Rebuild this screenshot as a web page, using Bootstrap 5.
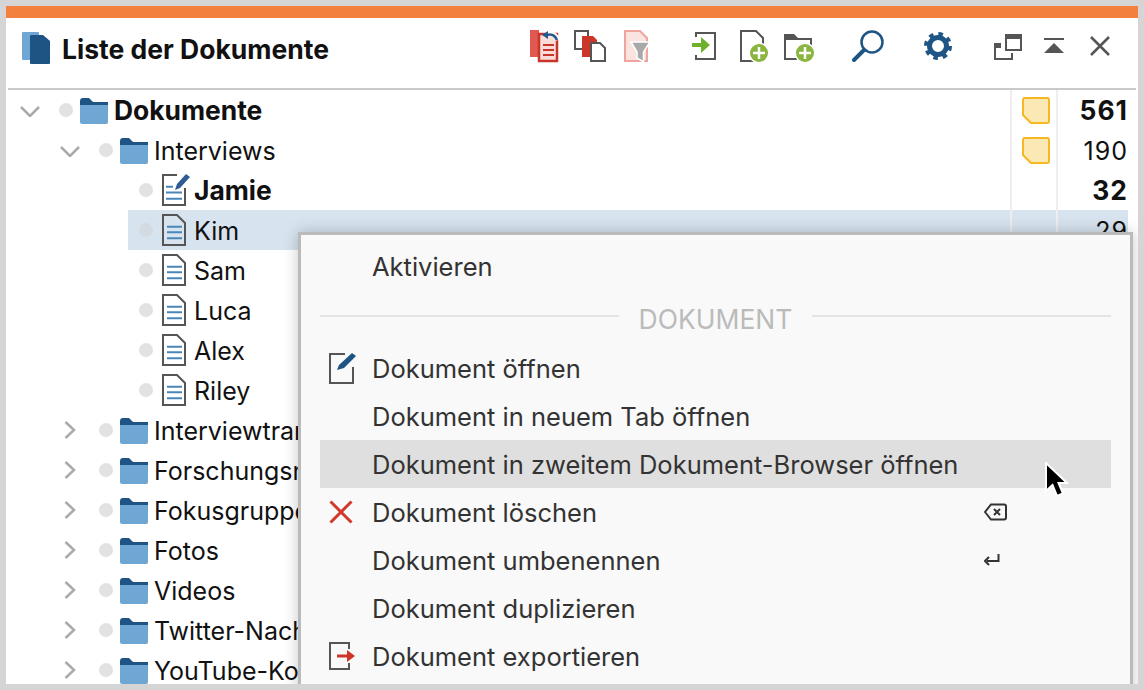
<!DOCTYPE html>
<html lang="de">
<head>
  <meta charset="UTF-8">
  <meta name="viewport" content="width=device-width, initial-scale=1">
  <title>Liste der Dokumente</title>
  <link href="https://cdn.jsdelivr.net/npm/bootstrap@5.3.2/dist/css/bootstrap.min.css" rel="stylesheet">
  <style>
    html, body { height: 100%; overflow: hidden; }
    body { background: #d5d5d5; font-family: Inter, "Liberation Sans", sans-serif; color: #111; }
    .win { margin: 6px; height: 678px; background: #fff; overflow: hidden; position: relative; }
    .stripe { height: 12px; background: #f3803c; }
    .head { height: 70px; padding: 10px 28px 0 16px; }
    .head h1 { font-size: 26.5px; font-weight: 700; margin: 3px 0 0 12px; line-height: 36px; }
    .head svg { display: block; height: 36px; }
    .t16 { margin-left: 16px; } .t18 { margin-left: 18px; } .t21 { margin-left: 21px; }
    .t24 { margin-left: 24px; } .t26 { margin-left: 26px; } .t38 { margin-left: 38px; }
    .t40 { margin-left: 40px; } .t42 { margin-left: 42px; }
    .rule { height: 2px; margin: 0 2px; background: #c9c9c9; }
    .tree-row { height: 40px; font-size: 25px; margin-right: 10px; white-space: nowrap; }
    .tree-row.fw-bold { font-size: 26.4px; }
    .lv0 { padding-left: 14px; } .lv1 { padding-left: 54px; } .lv2 { padding-left: 133px; }
    .tree-row.sel { background: #d7e3ef; margin-left: 122px; padding-left: 11px; }
    .twist { width: 39px; flex: none; }
    .twist.closed { padding-left: 4px; }
    .dot { width: 14px; height: 14px; border-radius: 50%; background: #e2e2e2; flex: none; margin-right: 7px; }
    .sel .dot { background: #d3dae1; }
    .slot { width: 28px; flex: none; margin-right: 6px; }
    .slot.fold { margin-top: 2px; }
    .lv2 .slot svg { margin-left: 2px; }
    .name { flex: 1 1 auto; min-width: 0; padding-top: 2px; line-height: 1.2; }
    .memo { width: 48px; height: 40px; flex: none; border-left: 2px solid #eee; border-right: 2px solid #eee; padding-left: 4px; }
    .count { width: 70px; flex: none; text-align: right; padding-top: 2px; line-height: 1.2; letter-spacing: 1px; }
    .ctx.dropdown-menu { position: absolute; left: 292px; top: 226px; width: 835px; min-width: 0; margin: 0; padding: 7px 19px 12px;
      background: #f9f9f9; border: 3px solid #bbb; border-radius: 0; box-shadow: 0 0 14px rgba(0, 0, 0, .22); font-size: 25.5px; color: #333; }
    .ctx .dropdown-item { height: 48px; padding: 2px 0 0; color: #333; }
    .ctx .dropdown-item.hot { background: #dfdfdf; }
    .ctx .ico { width: 52px; flex: none; padding-left: 9px; margin-top: -2px; }
    .ctx .key { width: 24px; margin-left: auto; margin-right: 103px; flex: none; margin-top: -2px; }
    .ctx-head { height: 54px; color: #bbb; font-size: 26.5px; }
    .ctx-head span { padding: 6px 20px 0; }
    .ctx-head i { flex: 1 1 auto; height: 2px; background: #e4e4e4; margin-top: -2px; }
    .cursor { position: absolute; left: 1037px; top: 456px; z-index: 1001; }
  </style>
</head>
<body>
  <svg class="d-none">
    <symbol id="folder" viewBox="0 0 28 26">
      <rect y="5" width="28" height="21" rx="2" fill="#6ea6d4"/>
      <path d="M0 7V3Q0 0 3 0H9L13 4H28V7Z" fill="#1d5484"/>
    </symbol>
    <symbol id="doc" viewBox="0 0 24 32">
      <path d="M1 1H15L23 9V31H1Z" fill="none" stroke="#555" stroke-width="2"/>
      <path d="M5 12.7H20M5 18.3H20M5 24.3H20" stroke="#4a86b8" stroke-width="2"/>
    </symbol>
    <symbol id="down" viewBox="0 0 20 11"><path d="M1 1L10 10L19 1" fill="none" stroke="#aaa" stroke-width="2.5"/></symbol>
    <symbol id="right" viewBox="0 0 12 18"><path d="M1.5 1L10 9L1.5 17" fill="none" stroke="#aaa" stroke-width="2.5"/></symbol>
    <symbol id="note" viewBox="0 0 28 27"><path d="M3 1H25Q27 1 27 3V24Q27 26 25 26H9L1 18V3Q1 1 3 1Z" fill="#fbe9b5" stroke="#f5b820" stroke-width="2"/></symbol>
  </svg>

  <div class="win">
    <div class="stripe"></div>

    <div class="head d-flex align-items-start">
      <svg width="28" viewBox="22 28 28 36">
        <rect x="22" y="32" width="17" height="28" rx="1" fill="#6fa6d3"/>
        <path d="M31 35H43L50 41V63Q50 64 49 64H31Q30 64 30 63V36Q30 35 31 35Z" fill="#1d5484"/>
      </svg>
      <h1>Liste der Dokumente</h1>
      <div class="ms-auto d-flex">
        <svg width="29" viewBox="530 28 29 36">
          <rect x="530" y="30" width="9" height="27" fill="#e0584f"/>
          <rect x="539" y="34" width="18" height="27" fill="#fbdcd8" stroke="#c8352b" stroke-width="2.5"/>
          <path d="M543 45H554M543 50H554M543 55H554" stroke="#c8352b" stroke-width="2"/>
          <path d="M546 35Q554 31 558 40" fill="none" stroke="#fff" stroke-width="5"/>
          <path d="M547 35Q554 33 557 40" fill="none" stroke="#24598e" stroke-width="2.5"/>
          <path d="M542 35L548 31V39Z" fill="#24598e"/>
        </svg>
        <svg class="t16" width="32" viewBox="574 28 32 36" style="margin-left:15px">
          <path d="M588 36V31H575V49H583" fill="none" stroke="#555" stroke-width="2"/>
          <path d="M582 36H593L597 40V57H582Z" fill="#cc3529"/>
          <path d="M591 43H600L605 48V61H591Z" fill="#fff" stroke="#555" stroke-width="2"/>
        </svg>
        <svg class="t18" width="26" viewBox="624 28 26 36">
          <path d="M625 31H640L647 38V61H625Z" fill="#fbe3e0" stroke="#eda59d" stroke-width="2"/>
          <path d="M631 42H650L643.500 52V62L637 58V52Z" fill="#a9a9a9" stroke="#fff" stroke-width="1.500"/>
        </svg>
        <svg class="t42" width="24" viewBox="692 28 24 36">
          <path d="M696 37V33H715V59H696V55" fill="none" stroke="#555" stroke-width="2"/>
          <path d="M692 43H701V37L710 45L701 53V47H692Z" fill="#6fb12b"/>
        </svg>
        <svg class="t24" width="28" viewBox="740 28 28 36">
          <path d="M741 31H756L763 38V61H741Z" fill="none" stroke="#555" stroke-width="2"/>
          <circle cx="759" cy="53" r="10.500" fill="#fff"/>
          <circle cx="759" cy="53" r="9" fill="#8ab53f"/>
          <path d="M759 47V59M753 53H765" stroke="#fff" stroke-width="2.500"/>
        </svg>
        <svg class="t16" width="30" viewBox="784 28 30 36">
          <path d="M785 37V59H811V39H785" fill="none" stroke="#555" stroke-width="2"/>
          <path d="M784 40V34H794L798 38H812V40Z" fill="#555"/>
          <circle cx="805" cy="53" r="10.500" fill="#fff"/>
          <circle cx="805" cy="53" r="9" fill="#8ab53f"/>
          <path d="M805 47V59M799 53H811" stroke="#fff" stroke-width="2.500"/>
        </svg>
        <svg class="t38" width="32" viewBox="852 28 32 36">
          <circle cx="872" cy="42" r="10.500" fill="none" stroke="#1e5585" stroke-width="2.500"/>
          <path d="M864 50L854 60" stroke="#1e5585" stroke-width="4" stroke-linecap="round"/>
        </svg>
        <svg class="t40" width="28" viewBox="924 28 28 36">
          <circle cx="938" cy="46" r="8.500" fill="none" stroke="#1e5585" stroke-width="5"/>
          <circle cx="938" cy="46" r="12" fill="none" stroke="#1e5585" stroke-width="4" stroke-dasharray="4.500 4.925"/>
        </svg>
        <svg class="t42" width="28" viewBox="994 28 28 36">
          <path d="M1001 44H995V59H1012V53" fill="none" stroke="#555" stroke-width="2"/>
          <rect x="995" y="43" width="6" height="5" fill="#555"/>
          <rect x="1006" y="35" width="15" height="15" fill="none" stroke="#555" stroke-width="2"/>
          <rect x="1005" y="34" width="17" height="5" fill="#555"/>
        </svg>
        <svg class="t21" width="21" viewBox="1043 28 21 36">
          <path d="M1044 39H1064" stroke="#555" stroke-width="2"/>
          <path d="M1054 43L1064 53H1044Z" fill="#555"/>
        </svg>
        <svg class="t26" width="20" viewBox="1090 28 20 36">
          <path d="M1091 37L1109 55M1109 37L1091 55" stroke="#555" stroke-width="2.500"/>
        </svg>
      </div>
    </div>
    <div class="rule"></div>

    <div class="tree-row lv0 d-flex align-items-center fw-bold">
      <div class="twist"><svg width="20" height="11"><use href="#down"/></svg></div>
      <div class="dot"></div>
      <div class="slot fold"><svg class="d-block" width="28" height="26"><use href="#folder"/></svg></div>
      <div class="name">Dokumente</div>
      <div class="memo d-flex align-items-center justify-content-center"><svg width="28" height="27"><use href="#note"/></svg></div>
      <div class="count">561</div>
    </div>
    <div class="tree-row lv1 d-flex align-items-center">
      <div class="twist"><svg width="20" height="11"><use href="#down"/></svg></div>
      <div class="dot"></div>
      <div class="slot fold"><svg class="d-block" width="28" height="26"><use href="#folder"/></svg></div>
      <div class="name">Interviews</div>
      <div class="memo d-flex align-items-center justify-content-center"><svg width="28" height="27"><use href="#note"/></svg></div>
      <div class="count">190</div>
    </div>
    <div class="tree-row lv2 d-flex align-items-center fw-bold">
      <div class="dot"></div>
      <div class="slot">
        <svg class="d-block" width="28" height="32" viewBox="0 0 28 32">
          <path d="M15 1H1V31H23V14" fill="none" stroke="#555" stroke-width="2"/>
          <path d="M4 12.700H11M4 18.500H20M4 24.700H20" stroke="#4a86b8" stroke-width="2"/>
          <path d="M24 0L28 3L18 14L13 16L15 10Z" fill="#2f5c92"/>
        </svg>
      </div>
      <div class="name">Jamie</div>
      <div class="memo"></div>
      <div class="count">32</div>
    </div>
    <div class="tree-row lv2 sel d-flex align-items-center">
      <div class="dot"></div>
      <div class="slot"><svg class="d-block" width="24" height="32"><use href="#doc"/></svg></div>
      <div class="name">Kim</div>
      <div class="memo"></div>
      <div class="count">29</div>
    </div>
    <div class="tree-row lv2 d-flex align-items-center">
      <div class="dot"></div>
      <div class="slot"><svg class="d-block" width="24" height="32"><use href="#doc"/></svg></div>
      <div class="name">Sam</div>
    </div>
    <div class="tree-row lv2 d-flex align-items-center">
      <div class="dot"></div>
      <div class="slot"><svg class="d-block" width="24" height="32"><use href="#doc"/></svg></div>
      <div class="name">Luca</div>
    </div>
    <div class="tree-row lv2 d-flex align-items-center">
      <div class="dot"></div>
      <div class="slot"><svg class="d-block" width="24" height="32"><use href="#doc"/></svg></div>
      <div class="name">Alex</div>
    </div>
    <div class="tree-row lv2 d-flex align-items-center">
      <div class="dot"></div>
      <div class="slot"><svg class="d-block" width="24" height="32"><use href="#doc"/></svg></div>
      <div class="name">Riley</div>
    </div>
    <div class="tree-row lv1 d-flex align-items-center">
      <div class="twist closed"><svg class="d-block" width="12" height="18"><use href="#right"/></svg></div>
      <div class="dot"></div>
      <div class="slot fold"><svg class="d-block" width="28" height="26"><use href="#folder"/></svg></div>
      <div class="name">Interviewtranskripte</div>
    </div>
    <div class="tree-row lv1 d-flex align-items-center">
      <div class="twist closed"><svg class="d-block" width="12" height="18"><use href="#right"/></svg></div>
      <div class="dot"></div>
      <div class="slot fold"><svg class="d-block" width="28" height="26"><use href="#folder"/></svg></div>
      <div class="name">Forschungsnotizen</div>
    </div>
    <div class="tree-row lv1 d-flex align-items-center">
      <div class="twist closed"><svg class="d-block" width="12" height="18"><use href="#right"/></svg></div>
      <div class="dot"></div>
      <div class="slot fold"><svg class="d-block" width="28" height="26"><use href="#folder"/></svg></div>
      <div class="name">Fokusgruppen</div>
    </div>
    <div class="tree-row lv1 d-flex align-items-center">
      <div class="twist closed"><svg class="d-block" width="12" height="18"><use href="#right"/></svg></div>
      <div class="dot"></div>
      <div class="slot fold"><svg class="d-block" width="28" height="26"><use href="#folder"/></svg></div>
      <div class="name">Fotos</div>
    </div>
    <div class="tree-row lv1 d-flex align-items-center">
      <div class="twist closed"><svg class="d-block" width="12" height="18"><use href="#right"/></svg></div>
      <div class="dot"></div>
      <div class="slot fold"><svg class="d-block" width="28" height="26"><use href="#folder"/></svg></div>
      <div class="name">Videos</div>
    </div>
    <div class="tree-row lv1 d-flex align-items-center">
      <div class="twist closed"><svg class="d-block" width="12" height="18"><use href="#right"/></svg></div>
      <div class="dot"></div>
      <div class="slot fold"><svg class="d-block" width="28" height="26"><use href="#folder"/></svg></div>
      <div class="name">Twitter-Nachrichten</div>
    </div>
    <div class="tree-row lv1 d-flex align-items-center">
      <div class="twist closed"><svg class="d-block" width="12" height="18"><use href="#right"/></svg></div>
      <div class="dot"></div>
      <div class="slot fold"><svg class="d-block" width="28" height="26"><use href="#folder"/></svg></div>
      <div class="name">YouTube-Kommentare</div>
    </div>

    <div class="ctx dropdown-menu show">
      <a class="dropdown-item d-flex align-items-center" href="#"><span class="ico"></span>Aktivieren</a>
      <div class="ctx-head d-flex align-items-center"><i></i><span>DOKUMENT</span><i></i></div>
      <a class="dropdown-item d-flex align-items-center" href="#">
        <span class="ico"><svg class="d-block" width="28" height="32" viewBox="0 0 28 32">
          <path d="M16 2H1V31H24V15" fill="none" stroke="#555" stroke-width="2"/>
          <path d="M23 1L27 4L15 16L8 18L10 13Z" fill="#1d5484"/>
        </svg></span>Dokument öffnen
      </a>
      <a class="dropdown-item d-flex align-items-center" href="#"><span class="ico"></span>Dokument in neuem Tab öffnen</a>
      <a class="dropdown-item hot d-flex align-items-center" href="#"><span class="ico"></span>Dokument in zweitem Dokument-Browser öffnen</a>
      <a class="dropdown-item d-flex align-items-center" href="#">
        <span class="ico"><svg class="d-block" width="24" height="24" viewBox="0 0 24 24"><path d="M1.500 1.500L22.500 22.500M22.500 1.500L1.500 22.500" stroke="#d0392b" stroke-width="3"/></svg></span>Dokument löschen
        <span class="key"><svg class="d-block" width="23" height="18" viewBox="0 0 23 18">
          <path d="M7 1.500H20Q22 1.500 22 3.500V14.500Q22 16.500 20 16.500H7L1 9Z" fill="none" stroke="#333" stroke-width="2"/>
          <path d="M10 6L16 12M16 6L10 12" stroke="#333" stroke-width="2"/>
        </svg></span>
      </a>
      <a class="dropdown-item d-flex align-items-center" href="#"><span class="ico"></span>Dokument umbenennen
        <span class="key"><svg class="d-block" width="16" height="12" viewBox="0 0 16 12">
          <path d="M14.500 0V7H3" fill="none" stroke="#333" stroke-width="2"/><path d="M5 3L1 7L5 11" fill="none" stroke="#333" stroke-width="2"/>
        </svg></span>
      </a>
      <a class="dropdown-item d-flex align-items-center" href="#"><span class="ico"></span>Dokument duplizieren</a>
      <a class="dropdown-item d-flex align-items-center" href="#">
        <span class="ico"><svg class="d-block" width="26" height="28" viewBox="0 0 26 28">
          <path d="M20 7V1H1V27H20V21" fill="none" stroke="#555" stroke-width="2"/>
          <path d="M8 12.500H18V8L26 14L18 20V15.500H8Z" fill="#cc3529"/>
        </svg></span>Dokument exportieren
      </a>
    </div>

    <svg class="cursor" width="28" height="40" viewBox="0 0 28 40">
      <path d="M3 1V29L9.500 23L14 34L20 31.500L15.500 21H24Z" fill="#000" stroke="#fff" stroke-width="2"/>
    </svg>
  </div>
  <script src="https://cdn.jsdelivr.net/npm/bootstrap@5.3.2/dist/js/bootstrap.bundle.min.js"></script>
</body>
</html>
